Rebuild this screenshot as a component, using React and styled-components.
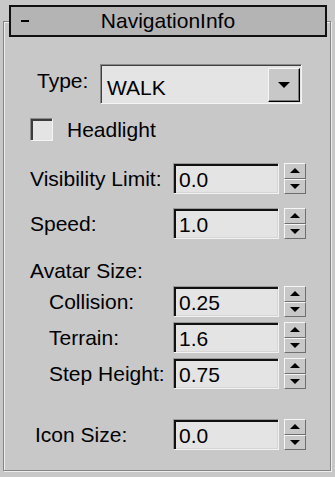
import React from "react";
import styled, { createGlobalStyle } from "styled-components";

const Global = createGlobalStyle`
  html, body { margin: 0; padding: 0; background: #c8c8c8; }
  body {
    width: 335px; height: 477px; overflow: hidden;
    font-family: "Liberation Sans", Arial, sans-serif;
    font-size: 21px; color: #000;
  }
  #root { padding-top: 21px; }
`;

const Frame = styled.div`
  box-sizing: border-box;
  margin: 0 4px 0 3px;
  height: 450px;
  border: 1px solid #858585;
  box-shadow: inset 1px 1px 0 #eeeeee, 1px 1px 0 #eeeeee;
  display: flex;
  flex-direction: column;
`;

const Header = styled.div`
  box-sizing: border-box;
  margin: -17px 3px 0 5px;
  height: 32px;
  border: 2px solid #101010;
  background: #b4b4b4;
  display: grid;
  grid-template-columns: 40px 1fr 40px;
  align-items: center;
`;

const Minus = styled.span`
  display: block;
  width: 8px;
  height: 2px;
  background: #000;
  margin-left: 10px;
`;

const Title = styled.span`
  text-align: center;
  line-height: 1;
  margin-top: -1px;
`;

const Row = styled.div`
  display: flex;
  align-items: center;
  height: ${(p) => p.$h}px;
  margin-top: ${(p) => p.$top}px;
  padding-left: ${(p) => p.$indent}px;
  padding-right: ${(p) => p.$right ?? 24}px;
`;

const Label = styled.span`
  flex: 1;
  white-space: nowrap;
  line-height: 1;
  margin-top: ${(p) => p.$shift ?? 0}px;
`;

const Select = styled.div`
  box-sizing: border-box;
  width: 202px;
  height: 40px;
  background: #e4e4e4;
  border-top: 1px solid #8a8a8a;
  border-left: 1px solid #8a8a8a;
  border-right: 1px solid #f4f4f4;
  border-bottom: 1px solid #f4f4f4;
  box-shadow: inset 1px 1px 0 #404040;
  display: flex;
  align-items: center;
  padding: 3px 1px 1px 6px;
`;

const SelectValue = styled.span`
  flex: 1;
  line-height: 1;
  margin-top: 5px;
`;

const SelectButton = styled.div`
  box-sizing: border-box;
  width: 32px;
  height: 34px;
  align-self: flex-end;
  background: #c8c8c8;
  border-top: 1px solid #f6f6f6;
  border-left: 1px solid #f6f6f6;
  border-right: 1px solid #000;
  border-bottom: 1px solid #000;
  box-shadow: inset -1px -1px 0 #7a7a7a;
  display: flex;
  align-items: center;
  justify-content: center;
`;

const Arrow = styled.span`
  width: 0;
  height: 0;
  border-left: ${(p) => p.$w / 2}px solid transparent;
  border-right: ${(p) => p.$w / 2}px solid transparent;
  ${(p) =>
    p.$up
      ? `border-bottom: ${p.$hgt}px solid #000;`
      : `border-top: ${p.$hgt}px solid #000;`}
`;

const Check = styled.span`
  box-sizing: border-box;
  width: 23px;
  height: 23px;
  background: #e4e4e4;
  border-top: 1px solid #8a8a8a;
  border-left: 1px solid #8a8a8a;
  border-right: 1px solid #f4f4f4;
  border-bottom: 1px solid #f4f4f4;
  box-shadow: inset 2px 2px 0 #3c3c3c;
  margin-right: 14px;
`;

const CheckText = styled.span`
  line-height: 1;
`;

const Field = styled.div`
  box-sizing: border-box;
  width: 106px;
  height: 31px;
  background: #e4e4e4;
  border-top: 1px solid #9a9a9a;
  border-left: 1px solid #9a9a9a;
  border-right: 1px solid #f2f2f2;
  border-bottom: 1px solid #f2f2f2;
  box-shadow: inset 2px 2px 0 #111, inset -1px -1px 0 #d6d6d6;
  padding: 2px 0 0 5px;
  display: flex;
  align-items: center;
  line-height: 1;
`;

const Spinner = styled.div`
  box-sizing: border-box;
  width: 22px;
  height: 31px;
  margin-left: 5px;
  display: flex;
  flex-direction: column;
`;

const SpinButton = styled.div`
  box-sizing: border-box;
  flex: 1;
  background: #c8c8c8;
  border-top: 1px solid #f6f6f6;
  border-left: 1px solid #f6f6f6;
  border-right: 1px solid #6e6e6e;
  border-bottom: 1px solid #6e6e6e;
  display: flex;
  align-items: center;
  justify-content: center;
`;

function SpinRow({ label, value, indent, top }) {
  return (
    <Row $h={31} $top={top} $indent={indent}>
      <Label>{label}</Label>
      <Field>{value}</Field>
      <Spinner>
        <SpinButton>
          <Arrow $up $w={10} $hgt={5} />
        </SpinButton>
        <SpinButton>
          <Arrow $w={10} $hgt={5} />
        </SpinButton>
      </Spinner>
    </Row>
  );
}

export default function App() {
  return (
    <>
      <Global />
      <Frame>
        <Header>
          <Minus />
          <Title>NavigationInfo</Title>
          <span />
        </Header>
        <Row $h={40} $top={27} $indent={33} $right={28}>
          <Label $shift={-8}>Type:</Label>
          <Select>
            <SelectValue>WALK</SelectValue>
            <SelectButton>
              <Arrow $w={12} $hgt={6} />
            </SelectButton>
          </Select>
        </Row>
        <Row $h={23} $top={14} $indent={26}>
          <Check />
          <CheckText>Headlight</CheckText>
        </Row>
        <SpinRow label="Visibility Limit:" value="0.0" indent={26} top={22} />
        <SpinRow label="Speed:" value="1.0" indent={26} top={14} />
        <Row $h={24} $top={19} $indent={26}>
          <Label>Avatar Size:</Label>
        </Row>
        <SpinRow label="Collision:" value="0.25" indent={45} top={4} />
        <SpinRow label="Terrain:" value="1.6" indent={45} top={5} />
        <SpinRow label="Step Height:" value="0.75" indent={45} top={5} />
        <SpinRow label="Icon Size:" value="0.0" indent={31} top={30} />
      </Frame>
    </>
  );
}
